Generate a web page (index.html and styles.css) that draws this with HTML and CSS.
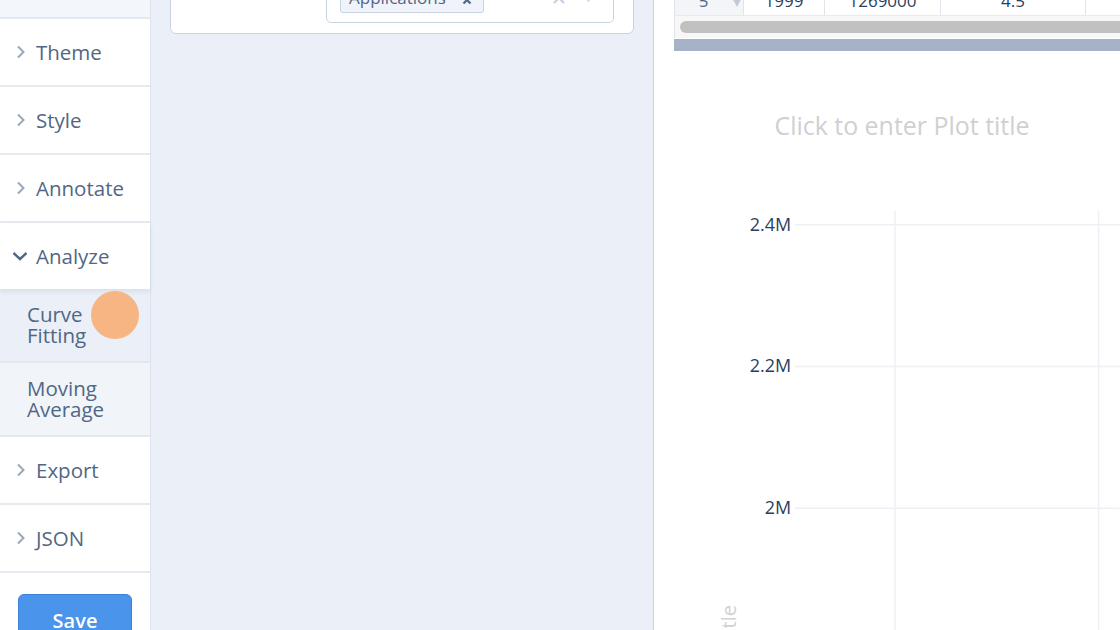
FILE: index.html
```html
<!DOCTYPE html>
<html>
<head>
<meta charset="utf-8">
<link rel="stylesheet" href="styles.css">
</head>
<body>
<div class="app">
  <aside class="sidebar">
    <div class="sub sub-top"></div>
    <div class="sec"><svg class="chev" viewBox="0 0 10 14"><path d="M2 1.5 L7.5 7 L2 12.5"/></svg><span>Theme</span></div>
    <div class="sec"><svg class="chev" viewBox="0 0 10 14"><path d="M2 1.5 L7.5 7 L2 12.5"/></svg><span>Style</span></div>
    <div class="sec"><svg class="chev" viewBox="0 0 10 14"><path d="M2 1.5 L7.5 7 L2 12.5"/></svg><span>Annotate</span></div>
    <div class="sec sec-open"><svg class="chev-down" viewBox="0 0 16 10"><path d="M1.5 2 L8 8 L14.5 2"/></svg><span>Analyze</span></div>
    <div class="sub sub-active"><span class="sub-text">Curve<br>Fitting</span></div>
    <div class="sub"><span class="sub-text">Moving<br>Average</span></div>
    <div class="sec"><svg class="chev" viewBox="0 0 10 14"><path d="M2 1.5 L7.5 7 L2 12.5"/></svg><span>Export</span></div>
    <div class="sec"><svg class="chev" viewBox="0 0 10 14"><path d="M2 1.5 L7.5 7 L2 12.5"/></svg><span>JSON</span></div>
    <div class="save-area"><button class="save">Save</button></div>
    <div class="cursor-dot"></div>
  </aside>

  <section class="middle">
    <div class="card">
      <div class="card-label"></div>
      <div class="dropdown">
        <div class="tag">
          <span class="tag-text">Applications</span>
          <svg class="tag-x" viewBox="0 0 10 10"><path d="M1.5 1.5 L8.5 8.5 M8.5 1.5 L1.5 8.5"/></svg>
        </div>
        <div class="dd-icons">
          <svg class="dd-clear" viewBox="0 0 14 14"><path d="M2 2 L12 12 M12 2 L2 12"/></svg>
          <svg class="dd-caret" viewBox="0 0 12 10"><path d="M1 1 L11 1 L6 8 Z"/></svg>
        </div>
      </div>
    </div>
  </section>

  <section class="right">
    <div class="table-wrap">
      <div class="row">
        <div class="cell c1"><span class="idx">5</span><svg class="tri" viewBox="0 0 10 10"><path d="M0.5 1 L9.5 1 L5 9.5 Z"/></svg></div>
        <div class="cell c2">1999</div>
        <div class="cell c3">1269000</div>
        <div class="cell c4">4.5</div>
        <div class="cell c5"></div>
      </div>
      <div class="scroll-track"><div class="thumb"></div></div>
    </div>
    <div class="band"></div>
    <svg class="plot" width="466" height="580" viewBox="0 0 466 580">
      <text class="plot-title" x="248" y="84" text-anchor="middle">Click to enter Plot title</text>
      <g class="grid">
        <line x1="241" y1="160" x2="241" y2="580"/>
        <line x1="445" y1="160" x2="445" y2="580"/>
        <line x1="141" y1="174" x2="466" y2="174"/>
        <line x1="141" y1="316" x2="466" y2="316"/>
        <line x1="141" y1="458" x2="466" y2="458"/>
      </g>
      <g class="ticks">
        <text x="137" y="180" text-anchor="end">2.4M</text>
        <text x="137" y="322" text-anchor="end">2.2M</text>
        <text x="137" y="464" text-anchor="end">2M</text>
      </g>
      <text class="axis-title" x="82" y="555" text-anchor="end" transform="rotate(-90 82 555)">Click to enter Y axis title</text>
    </svg>
  </section>
</div>
</body>
</html>
```

FILE: styles.css
```css
* { box-sizing: border-box; }
html, body { margin: 0; padding: 0; }
body {
  width: 1120px;
  height: 630px;
  overflow: hidden;
  font-family: "Open Sans", "Noto Sans", sans-serif;
  background: #ffffff;
}
.app {
  display: flex;
  width: 1120px;
  height: 630px;
  overflow: hidden;
}

/* Sidebar */
.sidebar {
  position: relative;
  width: 151px;
  flex: 0 0 151px;
  border-right: 1px solid #dde3ec;
  background: #ffffff;
  display: flex;
  flex-direction: column;
}
.sec {
  height: 68px;
  flex: 0 0 68px;
  border-bottom: 2px solid #e6eaf0;
  display: flex;
  align-items: center;
  padding-left: 16px;
  font-size: 20.5px;
  color: #506784;
  background: #ffffff;
}
.sec span { margin-left: 10px; }
.chev {
  width: 10px;
  height: 14px;
  fill: none;
  stroke: #9aa7b9;
  stroke-width: 2;
}
.sec-open {
  border-bottom: none;
  height: 66px;
  flex: 0 0 66px;
  padding-left: 12px;
  box-shadow: 0 3px 5px rgba(80, 103, 132, 0.12);
  position: relative;
  z-index: 1;
}
.sec-open span { margin-left: 8px; }
.chev-down {
  width: 16px;
  height: 10px;
  fill: none;
  stroke: #506784;
  stroke-width: 2.4;
}
.sub {
  height: 74px;
  flex: 0 0 74px;
  border-bottom: 2px solid #e3e8ef;
  background: #f1f4f9;
  color: #506784;
  font-size: 20.5px;
  padding-left: 27px;
  display: flex;
  align-items: center;
}
.sub-text { display: block; line-height: 21px; }
.sub-active { background: #ebf0f8; }
.sub-top {
  height: 19px;
  flex: 0 0 19px;
  background: #f3f6fa;
}
.save-area {
  flex: 1;
  padding: 21px 0 0 18px;
  background: #ffffff;
}
.save {
  width: 114px;
  height: 46px;
  border: 1px solid #3a83d8;
  border-radius: 6px;
  background: #4a95eb;
  color: #ffffff;
  font-family: "Open Sans", "Noto Sans", sans-serif;
  font-size: 20px;
  font-weight: 600;
  padding: 8px 0 0 0;
  display: block;
  text-align: center;
  line-height: 34px;
}
.cursor-dot {
  position: absolute;
  left: 91px;
  top: 291px;
  width: 48px;
  height: 48px;
  border-radius: 50%;
  background: #f6b582;
  z-index: 2;
}

/* Middle panel */
.middle {
  width: 503px;
  flex: 0 0 503px;
  background: #ebf0f8;
  border-right: 1px solid #c8d4e3;
  padding: 0 19px 0 19px;
}
.card {
  margin-top: -47px;
  height: 81px;
  background: #ffffff;
  border: 1px solid #c8d4e3;
  border-radius: 6px;
  display: flex;
  align-items: flex-end;
  padding: 0 19px 10px 0;
}
.card-label { flex: 1; }
.dropdown {
  width: 288px;
  height: 60px;
  border: 1px solid #c8d4e3;
  border-radius: 5px;
  display: flex;
  align-items: flex-end;
  padding: 0 0 9px 13px;
}
.tag {
  width: 144px;
  height: 30px;
  border: 1px solid #c8d4e3;
  border-radius: 3px;
  background: #f0f4fa;
  display: flex;
  align-items: center;
  padding-left: 8px;
  color: #506784;
  font-size: 17px;
  line-height: 20px;
}
.tag-text { position: relative; top: 0; }
.tag-x {
  width: 10px;
  height: 10px;
  margin-left: 16px;
  fill: none;
  stroke: #506784;
  stroke-width: 2.2;
  position: relative;
  top: 2px;
}
.dd-icons {
  flex: 1;
  display: flex;
  justify-content: flex-end;
  align-items: center;
  padding: 0 19px 8px 0;
  gap: 17px;
}
.dd-clear {
  width: 14px;
  height: 14px;
  fill: none;
  stroke: #c8d4e3;
  stroke-width: 2.4;
}
.dd-caret {
  width: 11px;
  height: 9px;
  fill: #c8d4e3;
  margin-top: 3px;
}

/* Right panel */
.right {
  flex: 1;
  background: #ffffff;
  display: flex;
  flex-direction: column;
  padding-left: 20px;
}
.table-wrap {
  margin-top: -14px;
  border-left: 1px solid #dfe3ea;
}
.row {
  display: flex;
  height: 30px;
  border-bottom: 1px solid #e6e9ee;
  font-size: 17px;
  color: #2a3f5f;
  line-height: 30px;
}
.cell {
  border-right: 1px solid #dfe3ea;
  text-align: center;
  flex: 0 0 auto;
  height: 29px;
}
.c1 { width: 69px; background: #f3f5f9; display: flex; align-items: center; }
.c1 .idx { width: 57px; color: #506784; }
.c1 .tri { width: 10px; height: 11px; fill: #c3cad6; margin-top: 3px; }
.c2 { width: 81px; }
.c3 { width: 116px; }
.c4 { width: 145px; }
.c5 { width: 60px; border-right: none; }
.scroll-track {
  height: 22px;
  background: #f7f7f7;
  padding: 5px 0 0 5px;
}
.thumb {
  height: 12px;
  margin-right: -10px;
  border-radius: 6px;
  background: #c1c1c1;
}
.band {
  height: 12px;
  margin-top: 1px;
  background: #a5b2c7;
}
.plot {
  display: block;
  margin-left: -20px;
  font-family: "Open Sans", "Noto Sans", sans-serif;
}
.plot-title { font-size: 25px; fill: #d0d0d0; }
.grid line { stroke: #edf0f4; stroke-width: 1.5; }
.ticks text { font-size: 18px; fill: #2a3f5f; }
.axis-title { font-size: 20px; fill: #d2d2d2; }
```
